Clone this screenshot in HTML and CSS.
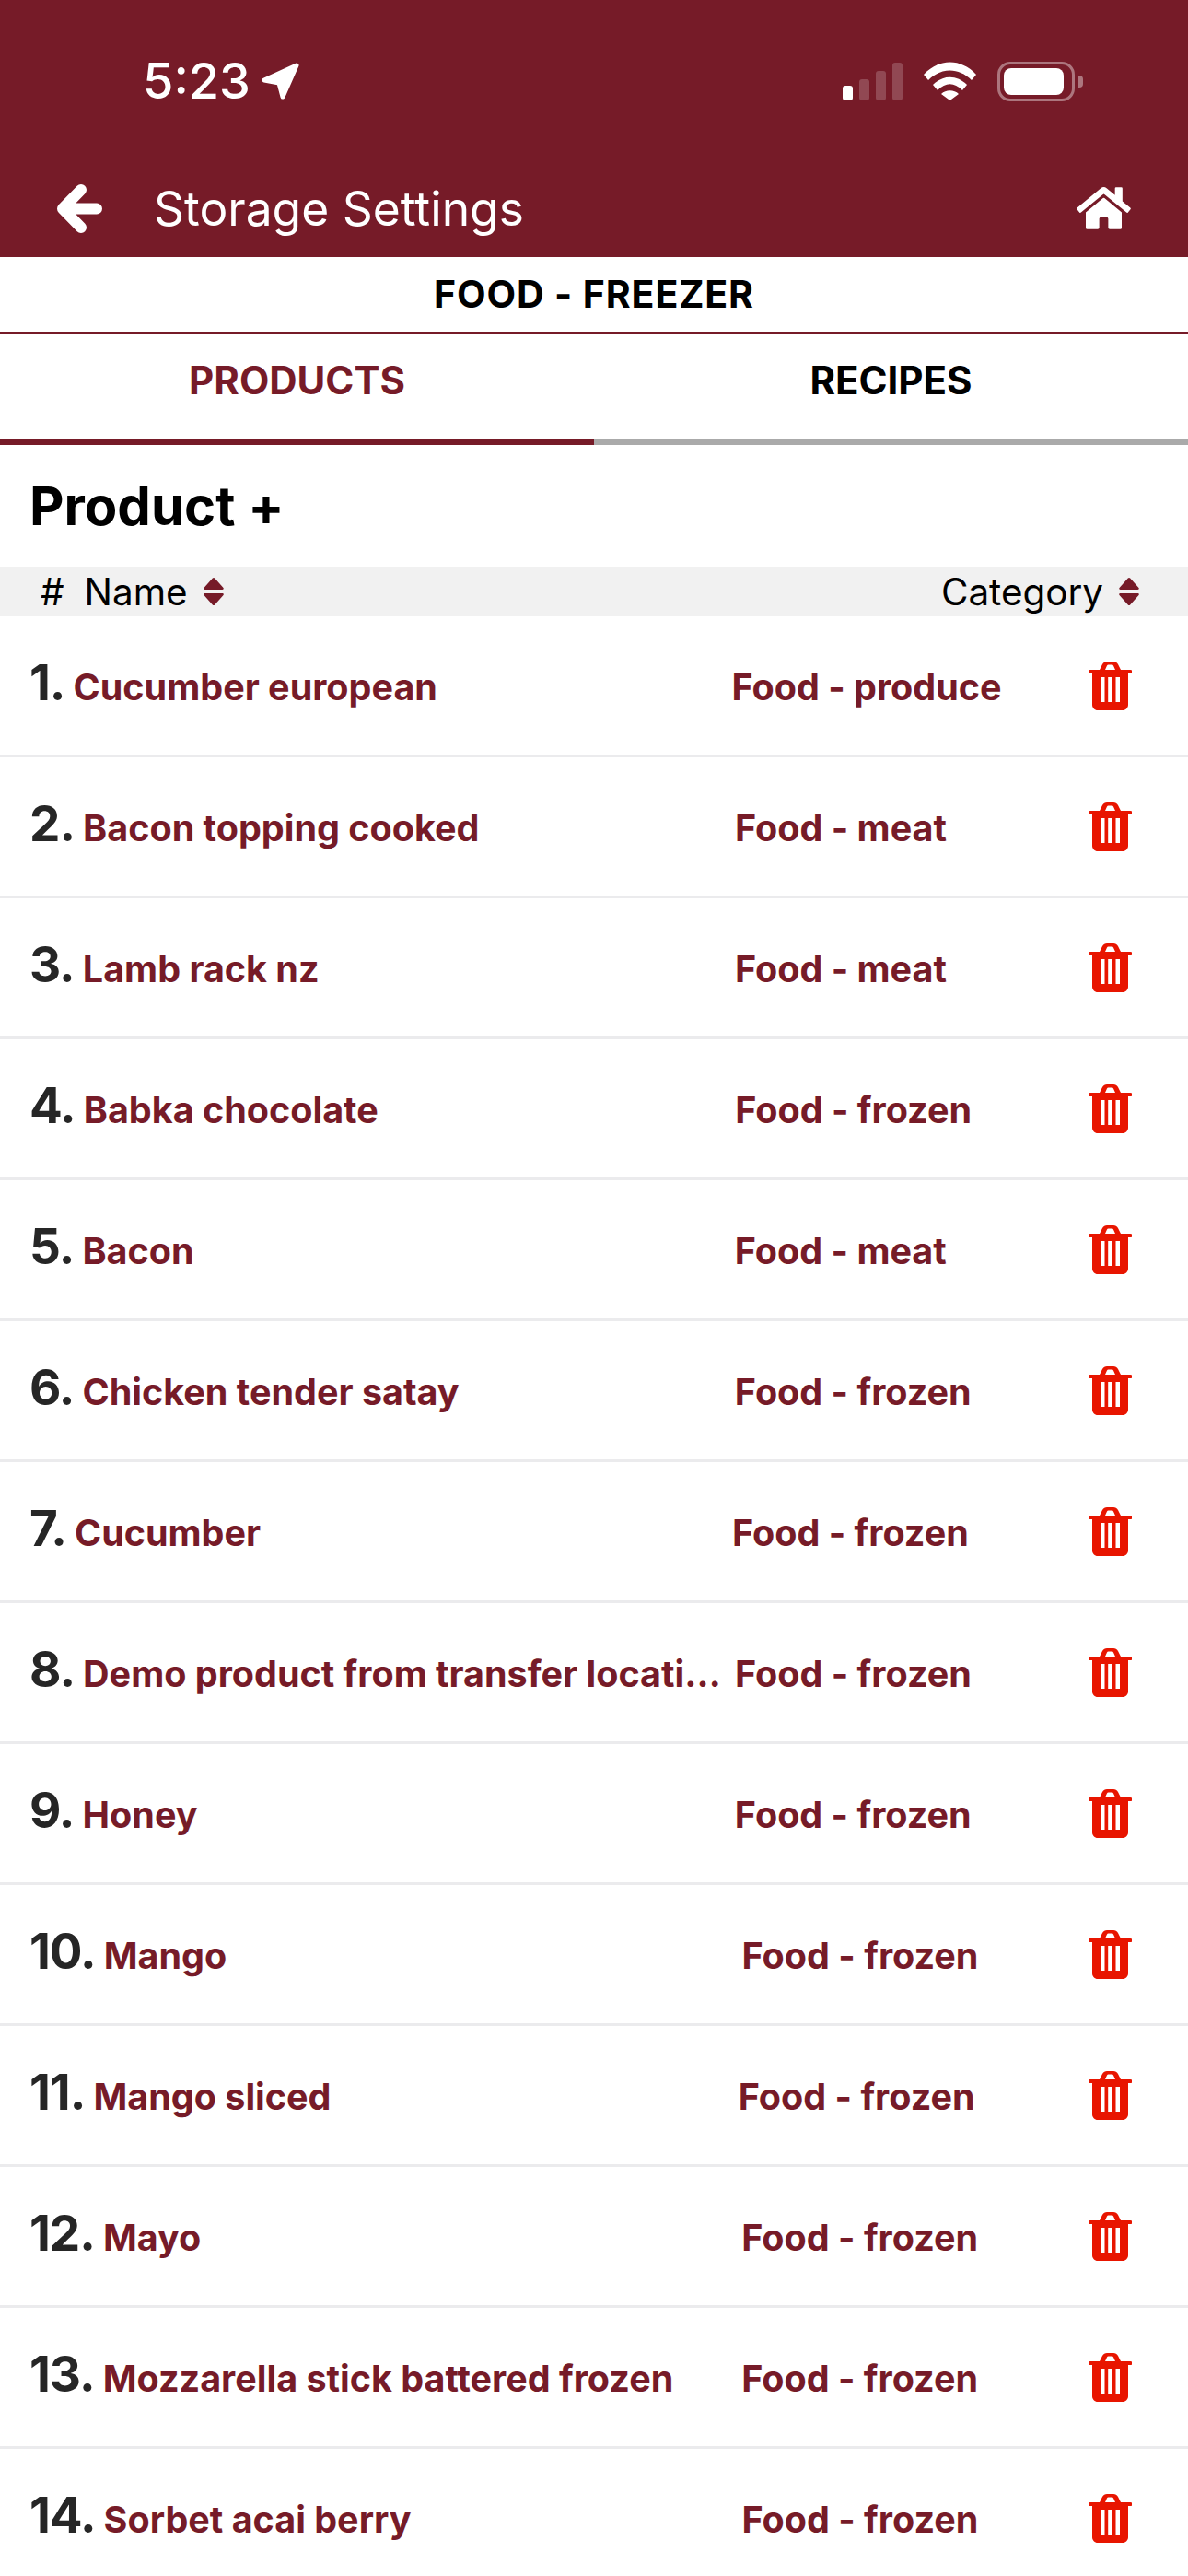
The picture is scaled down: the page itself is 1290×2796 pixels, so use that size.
FILE: index.html
```html
<!DOCTYPE html>
<html>
<head>
  <meta charset="UTF-8">
  <title>Storage Settings</title>
  <link rel="stylesheet" href="styles.css">
</head>
<body>
  <svg class="icon-defs">
    <symbol id="icon-trash" viewBox="0 0 47 53">
      <path d="M12 9 15 3C16 1 18 0 20 0h7c2 0 4 1 5 3l3 6h10.500a1.500 1.500 0 0 1 0 4H43v34c0 3.300-2.700 6-6 6H10c-3.300 0-6-2.700-6-6V13H1.500a1.500 1.500 0 0 1 0-4zM18 9h11l-2-4.500c-.3-.6-.8-1-1.500-1h-4c-.7 0-1.200.4-1.500 1zM13 17v27h4.500V17zM21.200 17v27h4.500V17zM29.500 17v27H34V17z" fill="#e81500" fill-rule="evenodd"/>
    </symbol>
    <symbol id="icon-sort" viewBox="0 0 22 30">
      <path d="M9.800 .6c.6-.8 1.800-.8 2.400 0L21.500 11c.6.8.2 2-1 2H1.500c-1.200 0-1.600-1.200-1-2zM1.500 17h19c1.200 0 1.600 1.200 1 2l-9.300 10.400c-.6.8-1.800.8-2.400 0L.5 19c-.6-.8-.2-2 1-2z" fill="#761b28"/>
    </symbol>
  </svg>

  <div id="page">
    <div class="app-header">
      <div class="status-bar">
        <div class="clock">
          <span>5:23</span>
          <svg class="loc-icon" viewBox="0 0 41 40"><path d="M38 3 3 19l16 3 4 15z" fill="#fff" stroke="#fff" stroke-width="5" stroke-linejoin="round"/></svg>
        </div>
        <div class="status-icons">
          <div class="signal">
            <i class="bar bar-1"></i>
            <i class="bar bar-2"></i>
            <i class="bar bar-3"></i>
            <i class="bar bar-4"></i>
          </div>
          <svg class="wifi-icon" viewBox="0 0 57 42"><path d="M0 14C16-4 41-4 57 14l-5 6C38 6 19 6 5 20zM10 25c11-11 26-11 37 0l-5 6c-9-9-18-9-27 0zM19 35c5-5 14-5 19 0l-9.500 7z" fill="#fff"/></svg>
          <div class="battery">
            <div class="battery-fill"></div>
          </div>
          <div class="battery-nub"></div>
        </div>
      </div>
      <div class="nav-bar">
        <svg class="back-icon" viewBox="0 0 49 53"><path d="M26 6 6 26.500 26 47M8 26.500h35" fill="none" stroke="#fff" stroke-width="12" stroke-linecap="round" stroke-linejoin="round"/></svg>
        <div class="nav-title">Storage Settings</div>
        <svg class="home-icon" viewBox="0 0 576 512"><path d="M280.370 148.260L96 300.110V464a16 16 0 0 0 16 16l112.060-.29a16 16 0 0 0 15.920-16V368a16 16 0 0 1 16-16h64a16 16 0 0 1 16 16v95.640a16 16 0 0 0 16 16.050L464 480a16 16 0 0 0 16-16V300L295.670 148.260a12.190 12.190 0 0 0-15.300 0zM571.600 251.470L488 182.560V44.050a12 12 0 0 0-12-12h-56a12 12 0 0 0-12 12v72.610L318.470 43a48 48 0 0 0-61 0L4.340 251.470a12 12 0 0 0-1.600 16.900l25.500 31A12 12 0 0 0 45.150 301l235.220-193.740a12.190 12.190 0 0 1 15.300 0L530.900 301a12 12 0 0 0 16.900-1.600l25.500-31a12 12 0 0 0-1.700-16.930z" fill="#fff"/></svg>
      </div>
    </div>

    <div class="location-title">FOOD - FREEZER</div>

    <div class="tabs">
      <div class="tab active">PRODUCTS</div>
      <div class="tab">RECIPES</div>
    </div>

    <div class="section-title">Product +</div>

    <div class="table-head">
      <span class="col-hash">#</span>
      <span class="col-name">Name</span>
      <svg class="sort-icon"><use href="#icon-sort"/></svg>
      <span class="col-category">Category</span>
      <svg class="sort-icon"><use href="#icon-sort"/></svg>
    </div>

    <div class="row">
      <div class="row-main"><span class="num">1.</span><span class="name">Cucumber european</span><span class="category">Food - produce</span></div>
      <svg class="trash"><use href="#icon-trash"/></svg>
    </div>
    <div class="row">
      <div class="row-main"><span class="num">2.</span><span class="name">Bacon topping cooked</span><span class="category">Food - meat</span></div>
      <svg class="trash"><use href="#icon-trash"/></svg>
    </div>
    <div class="row">
      <div class="row-main"><span class="num">3.</span><span class="name">Lamb rack nz</span><span class="category">Food - meat</span></div>
      <svg class="trash"><use href="#icon-trash"/></svg>
    </div>
    <div class="row">
      <div class="row-main"><span class="num">4.</span><span class="name">Babka chocolate</span><span class="category">Food - frozen</span></div>
      <svg class="trash"><use href="#icon-trash"/></svg>
    </div>
    <div class="row">
      <div class="row-main"><span class="num">5.</span><span class="name">Bacon</span><span class="category">Food - meat</span></div>
      <svg class="trash"><use href="#icon-trash"/></svg>
    </div>
    <div class="row">
      <div class="row-main"><span class="num">6.</span><span class="name">Chicken tender satay</span><span class="category">Food - frozen</span></div>
      <svg class="trash"><use href="#icon-trash"/></svg>
    </div>
    <div class="row">
      <div class="row-main"><span class="num">7.</span><span class="name">Cucumber</span><span class="category">Food - frozen</span></div>
      <svg class="trash"><use href="#icon-trash"/></svg>
    </div>
    <div class="row">
      <div class="row-main"><span class="num">8.</span><span class="name">Demo product from transfer location</span><span class="category">Food - frozen</span></div>
      <svg class="trash"><use href="#icon-trash"/></svg>
    </div>
    <div class="row">
      <div class="row-main"><span class="num">9.</span><span class="name">Honey</span><span class="category">Food - frozen</span></div>
      <svg class="trash"><use href="#icon-trash"/></svg>
    </div>
    <div class="row">
      <div class="row-main"><span class="num">10.</span><span class="name">Mango</span><span class="category">Food - frozen</span></div>
      <svg class="trash"><use href="#icon-trash"/></svg>
    </div>
    <div class="row">
      <div class="row-main"><span class="num">11.</span><span class="name">Mango sliced</span><span class="category">Food - frozen</span></div>
      <svg class="trash"><use href="#icon-trash"/></svg>
    </div>
    <div class="row">
      <div class="row-main"><span class="num">12.</span><span class="name">Mayo</span><span class="category">Food - frozen</span></div>
      <svg class="trash"><use href="#icon-trash"/></svg>
    </div>
    <div class="row">
      <div class="row-main"><span class="num">13.</span><span class="name">Mozzarella stick battered frozen</span><span class="category">Food - frozen</span></div>
      <svg class="trash"><use href="#icon-trash"/></svg>
    </div>
    <div class="row">
      <div class="row-main"><span class="num">14.</span><span class="name">Sorbet acai berry</span><span class="category">Food - frozen</span></div>
      <svg class="trash"><use href="#icon-trash"/></svg>
    </div>
  </div>
</body>
</html>
```

FILE: styles.css
```css
body {
  margin: 0;
  font-family: Inter, "Liberation Sans", sans-serif;
  background-color: #fff;
  color: #000;
}

.icon-defs {
  display: block;
  width: 0;
  height: 0;
}

#page {
  width: 1290px;
  height: 2796px;
  overflow: hidden;
}

.app-header {
  height: 279px;
  background-color: #761b28;
  color: #fff;
  box-sizing: border-box;
  padding-top: 58px;
}

.status-bar {
  height: 60px;
  display: flex;
  align-items: center;
  justify-content: space-between;
  padding: 0 114px 0 155px;
}

.clock {
  display: flex;
  align-items: center;
  gap: 12px;
  font-size: 54px;
  font-weight: 500;
  line-height: 60px;
}

.loc-icon {
  width: 41px;
  height: 40px;
}

.status-icons {
  display: flex;
  align-items: center;
}

.signal {
  display: flex;
  align-items: flex-end;
  gap: 7px;
  height: 41px;
  margin-right: 23px;
}

.bar {
  width: 11px;
  background-color: #fff;
  border-radius: 3px;
  opacity: 0.2;
}

.bar-1 { height: 16px; opacity: 1; }
.bar-2 { height: 23px; }
.bar-3 { height: 32px; }
.bar-4 { height: 41px; }

.wifi-icon {
  width: 57px;
  height: 42px;
  margin-right: 23px;
}

.battery {
  width: 84px;
  height: 43px;
  box-sizing: border-box;
  border: 3px solid rgba(255, 255, 255, 0.4);
  border-radius: 14px;
  padding: 4px;
}

.battery-fill {
  width: 65px;
  height: 29px;
  background-color: #fff;
  border-radius: 8px;
}

.battery-nub {
  width: 5px;
  height: 13px;
  margin-left: 4px;
  background-color: rgba(255, 255, 255, 0.4);
  border-radius: 0 4px 4px 0;
}

.nav-bar {
  display: flex;
  align-items: center;
  margin-top: 80px;
  height: 56px;
  padding: 0 62px;
}

.back-icon {
  width: 49px;
  height: 53px;
  margin-right: 56px;
}

.nav-title {
  flex: 1;
  font-size: 51.500px;
  font-weight: 400;
}

.home-icon {
  width: 59px;
  height: 52px;
}

.location-title {
  height: 81px;
  line-height: 81px;
  text-align: center;
  font-size: 41px;
  font-weight: 700;
  letter-spacing: 0.9px;
  border-bottom: 3px solid #761b28;
}

.tabs {
  display: flex;
}

.tab {
  flex: 1;
  height: 114px;
  line-height: 100px;
  text-align: center;
  font-size: 42px;
  font-weight: 700;
  border-bottom: 6px solid #aaa;
}

.tab.active {
  color: #761b28;
  border-bottom-color: #761b28;
}

.section-title {
  height: 132px;
  line-height: 132px;
  padding-left: 32px;
  font-size: 58px;
  font-weight: 700;
}

.table-head {
  display: flex;
  align-items: center;
  height: 54px;
  padding: 0 53px 0 44px;
  background-color: #f1f1f1;
  font-size: 40.400px;
}

.col-name {
  margin-left: 22px;
  margin-right: 17px;
}

.col-category {
  margin-left: auto;
  margin-right: 17px;
}

.sort-icon {
  width: 22px;
  height: 30px;
}

.row {
  display: flex;
  align-items: center;
  height: 153px;
  box-sizing: border-box;
  padding: 0 61px 0 32px;
  border-bottom: 3px solid #ebebed;
}

.row-main {
  flex: 1;
  min-width: 0;
  margin-bottom: 7px;
  display: flex;
  align-items: baseline;
}

.num {
  flex: none;
  font-size: 53px;
  font-weight: 700;
  letter-spacing: -1px;
  color: #262626;
  margin-right: 9px;
}

.name,
.category {
  min-width: 0;
  font-size: 39.500px;
  font-weight: 700;
  color: #761b28;
  white-space: nowrap;
  overflow: hidden;
  text-overflow: ellipsis;
}

.name {
  flex: 2 1 0;
  padding-right: 8px;
}

.category {
  flex: 1 1 0;
}

.trash {
  flex: none;
  width: 47px;
  height: 53px;
  margin-left: 34px;
}
```
